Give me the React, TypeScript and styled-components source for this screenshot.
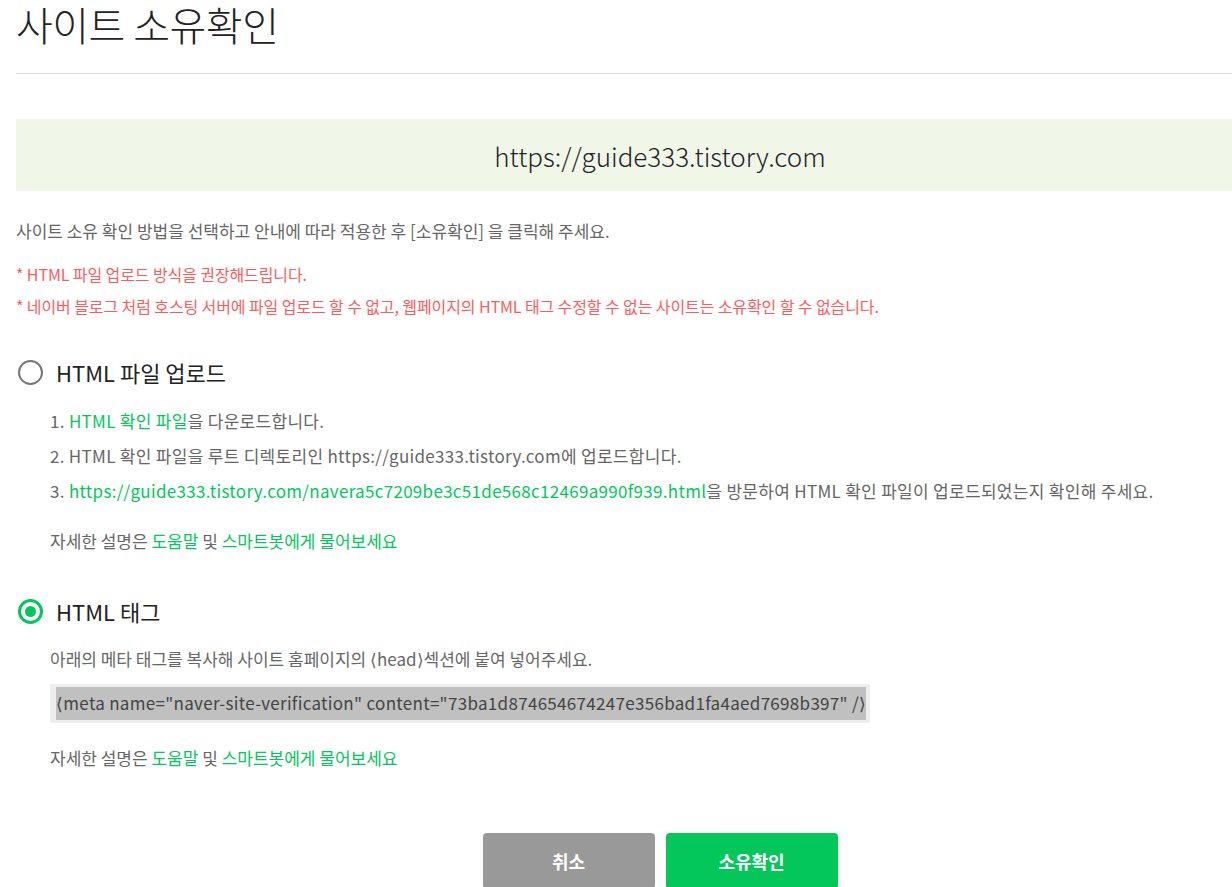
import React from "react";
import styled, { createGlobalStyle } from "styled-components";

const Global = createGlobalStyle`
  html, body { margin: 0; padding: 0; background: #fff; overflow: hidden; }
  body { font-family: "Noto Sans CJK KR", "Noto Sans", sans-serif; color: #333; }
`;

const Page = styled.div`
  width: 1288px;
  padding: 0 0 0 16px;
`;

const Title = styled.h1`
  margin: 0;
  font-size: 40px;
  font-weight: 300;
  line-height: 48px;
  letter-spacing: -0.5px;
  color: #222;
  padding-bottom: 25px;
  border-bottom: 1px solid #ddd;
`;

const Banner = styled.div`
  margin-top: 45px;
  height: 72px;
  background: #f0f7e9;
  display: flex;
  align-items: center;
  justify-content: center;
  font-size: 26px;
  font-weight: 300;
  color: #222;
`;

const Guide = styled.p`
  margin: 28px 0 0;
  font-size: 17px;
  line-height: 24px;
  color: #666;
`;

const Notes = styled.div`
  margin-top: 20px;
  display: flex;
  flex-direction: column;
  gap: 10px;
`;

const Note = styled.p`
  margin: 0;
  font-size: 16px;
  line-height: 22px;
  color: #ff5b5b;
  letter-spacing: -0.1px;
`;

const Section = styled.div<{ $top: number }>`
  margin-top: ${(p) => p.$top}px;
`;

const RadioRow = styled.label`
  display: flex;
  align-items: center;
  gap: 13px;
  font-size: 22px;
  line-height: 32px;
  color: #222;
  padding-left: 2px;
`;

const Radio = styled.span<{ $on?: boolean }>`
  box-sizing: border-box;
  width: 25px;
  height: 25px;
  border-radius: 50%;
  border: ${(p) => (p.$on ? "3px solid #03c75a" : "2.5px solid #777")};
  display: flex;
  align-items: center;
  justify-content: center;
  &::after {
    content: "";
    display: ${(p) => (p.$on ? "block" : "none")};
    width: 11px;
    height: 11px;
    border-radius: 50%;
    background: #03c75a;
  }
`;

const Body = styled.div`
  padding-left: 34px;
`;

const Steps = styled.ol`
  margin: 21px 0 0;
  padding: 0;
  list-style: none;
  display: flex;
  flex-direction: column;
  gap: 11px;
`;

const Step = styled.li`
  font-size: 17px;
  line-height: 24px;
  color: #666;
  letter-spacing: 0.3px;
  white-space: nowrap;
`;

const Green = styled.span`
  color: #03c75a;
`;

const Help = styled.p<{ $top: number }>`
  margin: ${(p) => p.$top}px 0 0;
  font-size: 17px;
  line-height: 24px;
  color: #666;
`;

const Desc = styled.p`
  margin: 20px 0 0;
  font-size: 17px;
  line-height: 24px;
  color: #666;
`;

const Bracket = styled.span`
  font-family: "DejaVu Sans", sans-serif;
  font-weight: 300;
`;

const CodeBox = styled.div`
  margin-top: 12px;
  display: inline-flex;
  align-items: center;
  height: 39px;
  padding: 0 4px 0 6px;
  background: #eee;
`;

const Code = styled.span`
  background: #c0c0c0;
  font-size: 17px;
  line-height: 31px;
  color: #444;
  letter-spacing: 0.3px;
`;

const Buttons = styled.div`
  margin-top: 63px;
  display: flex;
  justify-content: center;
  gap: 11px;
`;

const Button = styled.button<{ $primary?: boolean }>`
  width: 172px;
  height: 56px;
  border: 0;
  border-radius: 4px;
  background: ${(p) => (p.$primary ? "#03c75a" : "#999")};
  color: #fff;
  font-family: inherit;
  font-size: 18px;
  font-weight: 700;
`;

export default function App() {
  return (
    <Page>
      <Global />
      <Title>사이트 소유확인</Title>
      <Banner>https://guide333.tistory.com</Banner>
      <Guide>사이트 소유 확인 방법을 선택하고 안내에 따라 적용한 후 [소유확인] 을 클릭해 주세요.</Guide>
      <Notes>
        <Note>* HTML 파일 업로드 방식을 권장해드립니다.</Note>
        <Note>* 네이버 블로그 처럼 호스팅 서버에 파일 업로드 할 수 없고, 웹페이지의 HTML 태그 수정할 수 없는 사이트는 소유확인 할 수 없습니다.</Note>
      </Notes>

      <Section $top={39}>
        <RadioRow>
          <Radio />
          HTML 파일 업로드
        </RadioRow>
        <Body>
          <Steps>
            <Step>
              1. <Green>HTML 확인 파일</Green>을 다운로드합니다.
            </Step>
            <Step>2. HTML 확인 파일을 루트 디렉토리인 https://guide333.tistory.com에 업로드합니다.</Step>
            <Step>
              3. <Green>https://guide333.tistory.com/navera5c7209be3c51de568c12469a990f939.html</Green>을 방문하여 HTML 확인 파일이 업로드되었는지 확인해 주세요.
            </Step>
          </Steps>
          <Help $top={26}>
            자세한 설명은 <Green>도움말</Green> 및 <Green>스마트봇에게 물어보세요</Green>
          </Help>
        </Body>
      </Section>

      <Section $top={42}>
        <RadioRow>
          <Radio $on />
          HTML 태그
        </RadioRow>
        <Body>
          <Desc>
            아래의 메타 태그를 복사해 사이트 홈페이지의 <Bracket>⟨</Bracket>head<Bracket>⟩</Bracket>섹션에 붙여 넣어주세요.
          </Desc>
          <CodeBox>
            <Code>
              <Bracket>⟨</Bracket>meta name="naver-site-verification" content="73ba1d874654674247e356bad1fa4aed7698b397" /<Bracket>⟩</Bracket>
            </Code>
          </CodeBox>
          <Help $top={23}>
            자세한 설명은 <Green>도움말</Green> 및 <Green>스마트봇에게 물어보세요</Green>
          </Help>
        </Body>
      </Section>

      <Buttons>
        <Button>취소</Button>
        <Button $primary>소유확인</Button>
      </Buttons>
    </Page>
  );
}
